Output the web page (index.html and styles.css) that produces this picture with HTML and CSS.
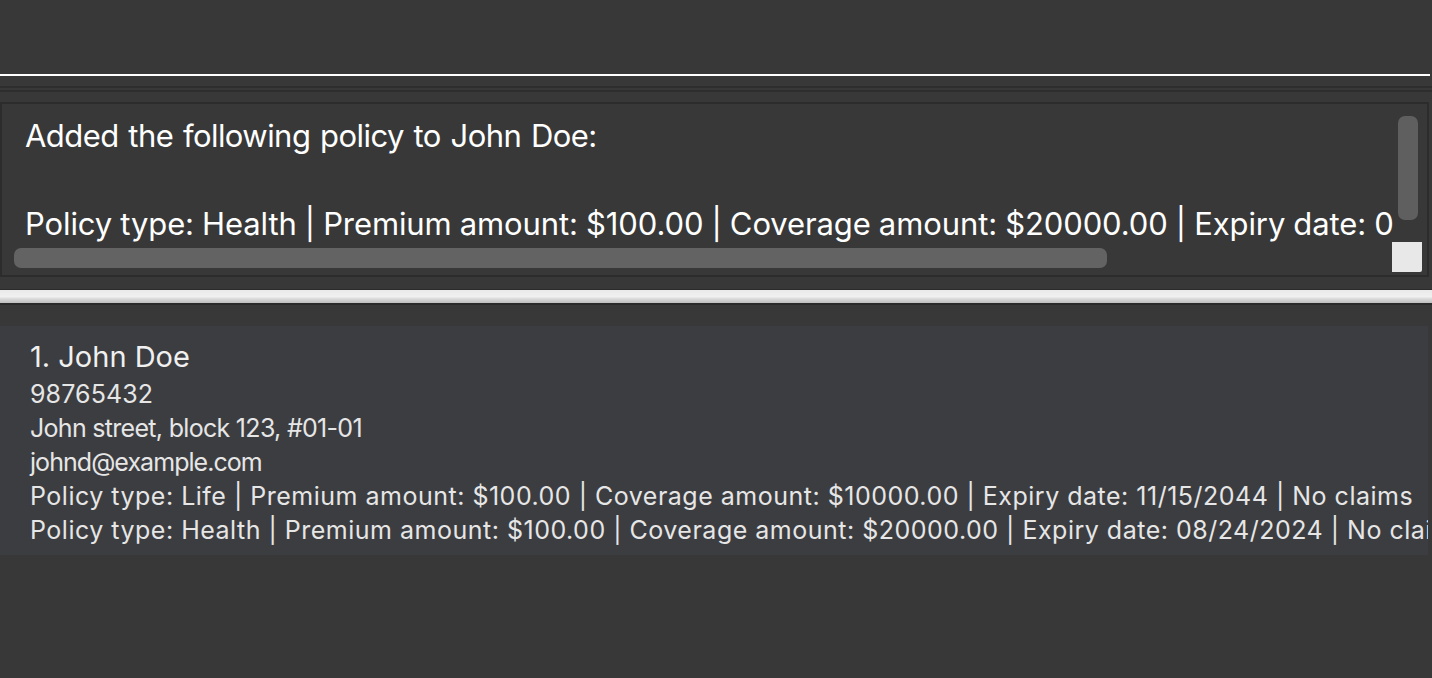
FILE: index.html
```html
<!DOCTYPE html>
<html>
<head>
<meta charset="utf-8">
<link rel="stylesheet" href="styles.css">
</head>
<body>
<div class="app">
  <div class="command-area"></div>
  <div class="command-underline"></div>
  <div class="separator"></div>
  <div class="result-box">
    <div class="result-viewport">
      <div class="result-text">
        <div class="rline">Added the following policy to John Doe:</div>
        <div class="rline">&nbsp;</div>
        <div class="rline policy">Policy type: Health | Premium amount: $100.00 | Coverage amount: $20000.00 | Expiry date: 08/24/2024 | No claims</div>
      </div>
    </div>
    <div class="vscroll"><div class="vthumb"></div></div>
    <div class="hscroll"><div class="hthumb"></div></div>
    <div class="corner"></div>
  </div>
  <div class="divider"></div>
  <div class="list">
    <div class="card">
      <div class="name">1. John Doe</div>
      <div class="detail phone">98765432</div>
      <div class="detail">John street, block 123, #01-01</div>
      <div class="detail email">johnd@example.com</div>
      <div class="detail policy">Policy type: Life | Premium amount: $100.00 | Coverage amount: $10000.00 | Expiry date: 11/15/2044 | No claims</div>
      <div class="detail policy">Policy type: Health | Premium amount: $100.00 | Coverage amount: $20000.00 | Expiry date: 08/24/2024 | No claims</div>
    </div>
  </div>
</div>
</body>
</html>
```

FILE: styles.css
```css
html, body {
  margin: 0;
  padding: 0;
  background: #383838;
}
.app {
  width: 1432px;
  height: 678px;
  overflow: hidden;
  display: flex;
  flex-direction: column;
  font-family: Inter, "Noto Sans", sans-serif;
  color: #ffffff;
}
.command-area {
  height: 74px;
  flex: none;
}
.command-underline {
  height: 2px;
  width: 1430px;
  background: #ffffff;
  flex: none;
}
.separator {
  flex: none;
  height: 2px;
  margin-top: 10px;
  border-bottom: 2px solid #2e2e2e;
  border-top: 2px solid #2e2e2e;
  margin-bottom: 10px;
}
.result-box {
  flex: none;
  position: relative;
  width: 1425px;
  height: 171px;
  border: 2px solid #2c2c2c;
  background: #383838;
  overflow: hidden;
}
.result-viewport {
  width: 1392px;
  height: 171px;
  overflow: hidden;
}
.result-text {
  padding: 10px 0 0 23px;
  white-space: nowrap;
  font-size: 31px;
  line-height: 44px;
  color: #ffffff;
}
.rline {
  letter-spacing: -0.55px;
  word-spacing: 1.5px;
}
.rline.policy {
  letter-spacing: -0.1px;
  word-spacing: -0.5px;
}
.vscroll {
  position: absolute;
  left: 1396px;
  top: 12px;
  width: 20px;
  height: 104px;
}
.vthumb {
  width: 100%;
  height: 100%;
  background: #5f5f5f;
  border-radius: 7px;
}
.hscroll {
  position: absolute;
  left: 12px;
  top: 144px;
  width: 1093px;
  height: 20px;
}
.hthumb {
  width: 100%;
  height: 100%;
  background: #636363;
  border-radius: 7px;
}
.corner {
  position: absolute;
  left: 1390px;
  top: 138px;
  width: 30px;
  height: 30px;
  background: #e8e8e8;
  border-bottom-right-radius: 2px;
}
.divider {
  flex: none;
  margin-top: 12px;
  height: 13px;
  background: linear-gradient(#e9e9e9 0%, #f0f0f0 50%, #d8d8d8 70%, #c0c0c0 100%);
  border-top: 1px solid #2b2b2b;
  border-bottom: 2px solid #2b2b2b;
}
.list {
  flex: none;
  padding-top: 21px;
}
.card {
  width: 1398px;
  background: #3c3d40;
  padding: 11px 0 8px 30px;
  white-space: nowrap;
  overflow: hidden;
  color: #e6e6e6;
}
.name {
  font-size: 29px;
  line-height: 40px;
  color: #f0f0f0;
}
.detail {
  font-size: 25px;
  line-height: 34px;
  letter-spacing: -0.7px;
  color: #e6e6e6;
}
.detail.phone {
  letter-spacing: 0.1px;
}
.detail.email {
  letter-spacing: -0.95px;
}
.detail.policy {
  letter-spacing: 0.5px;
}
```
